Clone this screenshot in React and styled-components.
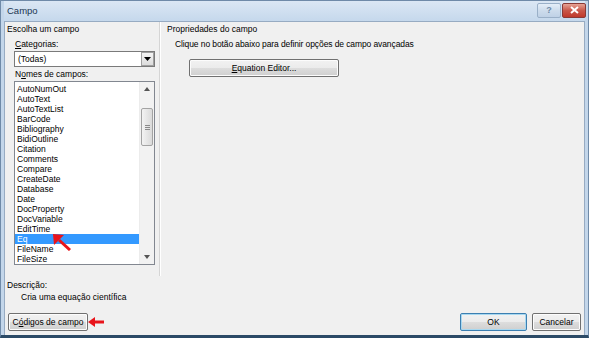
import React from "react";
import styled, { createGlobalStyle } from "styled-components";

const GlobalStyle = createGlobalStyle`
    html, body {
        margin: 0;
        padding: 0;
        background: #ffffff;
    }
    body {
        font-family: "Liberation Sans", Arial, sans-serif;
        font-size: 8.5px;
        color: #000;
    }
`;

const fields = [
    "AutoNumOut", "AutoText", "AutoTextList", "BarCode", "Bibliography",
    "BidiOutline", "Citation", "Comments", "Compare", "CreateDate",
    "Database", "Date", "DocProperty", "DocVariable", "EditTime",
    "Eq", "FileName", "FileSize",
];

const Window = styled.div`
    position: relative;
    width: 589px;
    height: 338px;
    box-sizing: border-box;
    display: flex;
    flex-direction: column;
    background: #c3d6ea;
    border: 1px solid #6f8aa8;
    border-bottom: 3px solid #2b4a66;
    padding: 0 3px;
`;

const TitleBar = styled.div`
    height: 20px;
    display: flex;
    align-items: center;
    justify-content: space-between;
    padding-left: 3px;
    background: linear-gradient(#dbe7f4, #c5d8ec);
`;

const Title = styled.span`
    font-size: 9.5px;
    color: #1b3551;
    margin-top: -2px;
`;

const Caption = styled.div`
    display: flex;
    margin-right: -1px;
    margin-top: -2px;
`;

const CapButton = styled.div`
    width: 22px;
    height: 13px;
    display: flex;
    align-items: center;
    justify-content: center;
    border: 1px solid ${(p) => (p.$close ? "#8a3a36" : "#9ab0c8")};
    border-radius: 2px;
    margin-left: 1px;
    background: ${(p) =>
        p.$close
            ? "linear-gradient(#e7a395, #c9584a 50%, #c0392b)"
            : "linear-gradient(#e4eef8, #cddcec 50%, #bfd1e6)"};
    color: ${(p) => (p.$close ? "#fff" : "#6f8aa8")};
    font-size: 9px;
    font-weight: bold;
`;

const Body = styled.div`
    flex: 1;
    display: flex;
    flex-direction: column;
    background: #f0f0f0;
    border: 1px solid #97abc2;
    border-bottom: none;
`;

const Main = styled.div`
    display: flex;
    height: 254px;
`;

const LeftPane = styled.div`
    width: 155px;
    padding: 1px 0 0 2px;
    box-sizing: border-box;
    border-right: 1px solid #d5d5d5;
    box-shadow: 1px 0 0 #ffffff;
`;

const RightPane = styled.div`
    flex: 1;
    padding: 1px 0 0 7px;
`;

const GroupLabel = styled.div`
    height: 12px;
    line-height: 12px;
`;

const FieldLabel = styled.div`
    margin: ${(p) => p.$top}px 0 0 8px;
    line-height: 10px;
    u { text-decoration: underline; }
`;

const Combo = styled.div`
    margin: 2px 0 0 7px;
    width: 141px;
    height: 16px;
    box-sizing: border-box;
    border: 1px solid #7a7a7a;
    background: #fff;
    display: flex;
    align-items: center;
    justify-content: space-between;
    padding-left: 3px;
`;

const ComboArrow = styled.div`
    width: 13px;
    height: 14px;
    box-sizing: border-box;
    border: 1px solid #a0a0a0;
    background: linear-gradient(#f4f4f4, #dcdcdc);
    display: flex;
    align-items: center;
    justify-content: center;
`;

const ListBox = styled.div`
    margin: 2px 0 0 7px;
    width: 141px;
    height: 184px;
    box-sizing: border-box;
    border: 1px solid #828790;
    background: #fff;
    display: flex;
`;

const Items = styled.div`
    flex: 1;
    padding-top: 2px;
`;

const Item = styled.div`
    height: 10px;
    line-height: 10px;
    padding-left: 2px;
    background: ${(p) => (p.$selected ? "#3399ff" : "transparent")};
    color: ${(p) => (p.$selected ? "#fff" : "#000")};
`;

const ScrollBar = styled.div`
    width: 14px;
    background: #f2f2f2;
    border-left: 1px solid #ececec;
    position: relative;
    display: flex;
    flex-direction: column;
    justify-content: space-between;
    align-items: center;
`;

const ScrollArrow = styled.div`
    height: 14px;
    display: flex;
    align-items: center;
    justify-content: center;
`;

const Thumb = styled.div`
    position: absolute;
    top: 26px;
    left: 1px;
    width: 10px;
    height: 36px;
    border: 1px solid #a3a3a3;
    border-radius: 2px;
    background: linear-gradient(90deg, #f3f3f3, #dadada);
    display: flex;
    flex-direction: column;
    align-items: center;
    justify-content: center;
    gap: 1px;
`;

const Grip = styled.span`
    width: 5px;
    height: 1px;
    background: #8a8a8a;
`;

const Hint = styled.div`
    margin: 4px 0 0 8px;
    line-height: 10px;
    letter-spacing: -0.1px;
`;

const Button = styled.div`
    height: 18px;
    box-sizing: border-box;
    width: ${(p) => p.$w}px;
    border: 1px solid ${(p) => (p.$default ? "#3c7fb1" : "#707070")};
    border-radius: 2px;
    background: linear-gradient(#f2f2f2 0%, #ebebeb 50%, #dddddd 51%, #cfcfcf 100%);
    box-shadow: inset 0 0 0 1px ${(p) => (p.$default ? "#a8d8f0" : "#fcfcfc")};
    display: flex;
    align-items: center;
    justify-content: center;
    u { text-decoration: underline; }
`;

const EqButton = styled(Button)`
    margin: 10px 0 0 22px;
`;

const Description = styled.div`
    padding: 3px 0 0 2px;
    line-height: 12px;
`;

const DescText = styled.div`
    padding-left: 14px;
`;

const Footer = styled.div`
    display: flex;
    align-items: center;
    margin-top: 10px;
    padding: 0 3px 0 3px;
    gap: 5px;
    position: relative;
`;

const Spacer = styled.div`
    flex: 1;
`;

const RedArrow = styled.svg`
    position: absolute;
    left: ${(p) => p.$x}px;
    top: ${(p) => p.$y}px;
`;

const ListWrap = styled.div`
    position: relative;
`;

export default function App() {
    return (
        <>
            <GlobalStyle />
            <Window>
                <TitleBar>
                    <Title>Campo</Title>
                    <Caption>
                        <CapButton>?</CapButton>
                        <CapButton $close>
                            <svg width="9" height="8" viewBox="0 0 9 8">
                                <path d="M1 1 L8 7 M8 1 L1 7" stroke="#fff" strokeWidth="2" />
                            </svg>
                        </CapButton>
                    </Caption>
                </TitleBar>
                <Body>
                    <Main>
                        <LeftPane>
                            <GroupLabel>Escolha um campo</GroupLabel>
                            <FieldLabel $top={4}><u>C</u>ategorias:</FieldLabel>
                            <Combo>
                                (Todas)
                                <ComboArrow>
                                    <svg width="7" height="4" viewBox="0 0 7 4">
                                        <path d="M0 0 H7 L3.5 4 Z" fill="#000" />
                                    </svg>
                                </ComboArrow>
                            </Combo>
                            <FieldLabel $top={2}>N<u>o</u>mes de campos:</FieldLabel>
                            <ListWrap>
                                <ListBox>
                                    <Items>
                                        {fields.map((f) => (
                                            <Item key={f} $selected={f === "Eq"}>{f}</Item>
                                        ))}
                                    </Items>
                                    <ScrollBar>
                                        <ScrollArrow>
                                            <svg width="6" height="4" viewBox="0 0 6 4">
                                                <path d="M0 4 L3 0 L6 4 Z" fill="#555" />
                                            </svg>
                                        </ScrollArrow>
                                        <Thumb>
                                            <Grip /><Grip /><Grip />
                                        </Thumb>
                                        <ScrollArrow>
                                            <svg width="6" height="4" viewBox="0 0 6 4">
                                                <path d="M0 0 H6 L3 4 Z" fill="#555" />
                                            </svg>
                                        </ScrollArrow>
                                    </ScrollBar>
                                </ListBox>
                                <RedArrow $x={46} $y={153} width="18" height="17" viewBox="0 0 18 17">
                                    <path d="M17 16 L6 6" stroke="#e8141b" strokeWidth="3" />
                                    <path d="M0 0 L11 1 L1 11 Z" fill="#e8141b" />
                                </RedArrow>
                            </ListWrap>
                        </LeftPane>
                        <RightPane>
                            <GroupLabel>Propriedades do campo</GroupLabel>
                            <Hint>Clique no botão abaixo para definir opções de campo avançadas</Hint>
                            <EqButton $w={150}><span><u>E</u>quation Editor...</span></EqButton>
                        </RightPane>
                    </Main>
                    <Description>
                        <div>Descrição:</div>
                        <DescText>Cria uma equação científica</DescText>
                    </Description>
                    <Footer>
                        <Button $w={80}><span>C<u>ó</u>digos de campo</span></Button>
                        <RedArrow $x={83} $y={4} width="16" height="10" viewBox="0 0 16 10">
                            <path d="M6 5 H16" stroke="#e8141b" strokeWidth="3" />
                            <path d="M0 5 L7 0 L7 10 Z" fill="#e8141b" />
                        </RedArrow>
                        <Spacer />
                        <Button $w={67} $default>OK</Button>
                        <Button $w={49}>Cancelar</Button>
                    </Footer>
                </Body>
            </Window>
        </>
    );
}
